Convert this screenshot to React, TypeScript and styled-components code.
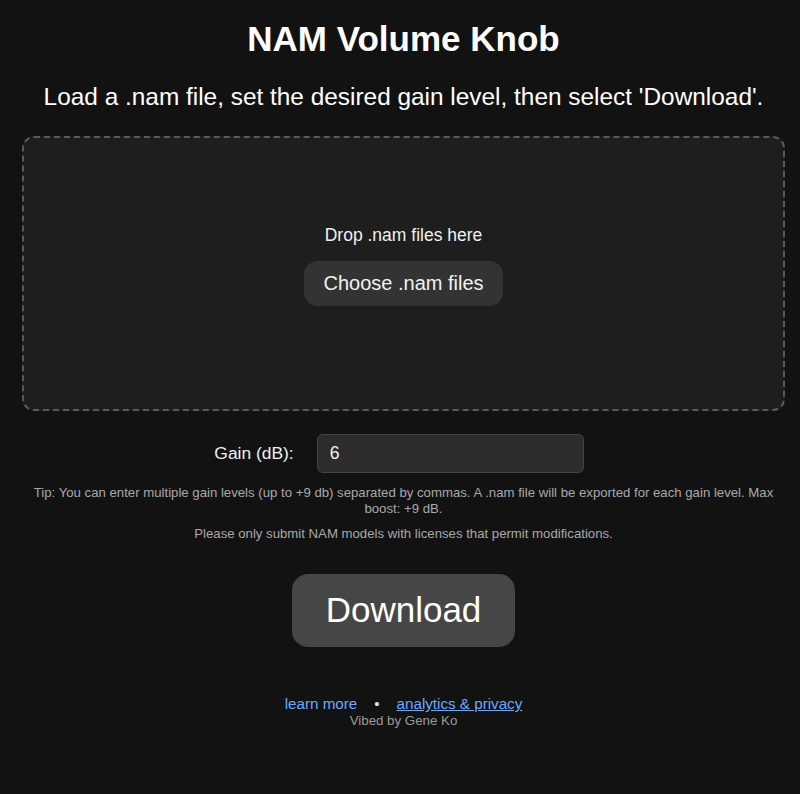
import React, { useState } from "react";
import styled, { createGlobalStyle } from "styled-components";

const GlobalStyle = createGlobalStyle`
  html, body {
    margin: 0;
    padding: 0;
    background: #121212;
  }
  body {
    font-family: "Liberation Sans", Arial, sans-serif;
    color: #ffffff;
  }
  * { box-sizing: border-box; }
`;

const Page = styled.main`
  padding: 19px 15px 40px 22px;
  display: flex;
  flex-direction: column;
  align-items: stretch;
  text-align: center;
`;

const Title = styled.h1`
  margin: 0;
  font-size: 35px;
  font-weight: 700;
  line-height: 1.15;
  color: #ffffff;
`;

const Subtitle = styled.p`
  margin: 24px 0 0;
  font-size: 24.4px;
  line-height: 1.15;
  color: #ffffff;
`;

const DropZone = styled.div`
  margin-top: 25px;
  height: 275px;
  border: 2px dashed #5a5a5a;
  border-radius: 12px;
  background: #1e1e1e;
  display: flex;
  flex-direction: column;
  align-items: center;
  padding-top: 87px;
  gap: 16px;
`;

const DropText = styled.div`
  font-size: 17.5px;
  line-height: 1.15;
  color: #f0f0f0;
`;

const ChooseButton = styled.button`
  font-family: inherit;
  font-size: 20px;
  line-height: 23px;
  color: #f2f2f2;
  background: #333333;
  border: none;
  border-radius: 14px;
  padding: 11px 19px;
  cursor: pointer;
`;

const GainRow = styled.div`
  margin-top: 23px;
  display: flex;
  justify-content: center;
  align-items: center;
  gap: 23px;
  padding-right: 9px;
`;

const GainLabel = styled.label`
  font-size: 17.4px;
  color: #f0f0f0;
`;

const GainInput = styled.input`
  width: 267px;
  height: 39px;
  font-family: inherit;
  font-size: 17.6px;
  color: #f2f2f2;
  background: #2c2c2c;
  border: 1px solid #454545;
  border-radius: 6px;
  padding: 0 12px;
  outline: none;
`;

const Note = styled.p<{ $gap: number }>`
  margin: ${(p) => p.$gap}px 0 0;
  font-size: 13.2px;
  line-height: 15.6px;
  color: #a9a9a9;
`;

const DownloadButton = styled.button`
  align-self: center;
  margin-top: 33px;
  font-family: inherit;
  font-size: 35px;
  line-height: 40px;
  color: #ffffff;
  background: #464646;
  border: none;
  border-radius: 16px;
  padding: 16px 34px 17px;
  cursor: pointer;
`;

const Footer = styled.footer`
  margin-top: 48px;
  display: flex;
  flex-direction: column;
  align-items: center;
`;

const LinkRow = styled.div`
  display: flex;
  align-items: center;
  gap: 17px;
  font-size: 15.2px;
  line-height: 1.15;
`;

const FooterLink = styled.a<{ $underline?: boolean }>`
  color: #6ea8fe;
  text-decoration: ${(p) => (p.$underline ? "underline" : "none")};
`;

const Bullet = styled.span`
  color: #e0e0e0;
  font-size: 15px;
`;

const Credit = styled.div`
  font-size: 13.3px;
  line-height: 1.2;
  color: #9a9a9a;
`;

export default function App() {
  const [gain, setGain] = useState("6");
  return (
    <>
      <GlobalStyle />
      <Page>
        <Title>NAM Volume Knob</Title>
        <Subtitle>
          Load a .nam file, set the desired gain level, then select 'Download'.
        </Subtitle>
        <DropZone>
          <DropText>Drop .nam files here</DropText>
          <ChooseButton type="button">Choose .nam files</ChooseButton>
        </DropZone>
        <GainRow>
          <GainLabel htmlFor="gain">Gain (dB):</GainLabel>
          <GainInput
            id="gain"
            value={gain}
            onChange={(e) => setGain(e.target.value)}
          />
        </GainRow>
        <Note $gap={12}>
          Tip: You can enter multiple gain levels (up to +9 db) separated by
          commas. A .nam file will be exported for each gain level. Max boost:
          +9 dB.
        </Note>
        <Note $gap={9}>
          Please only submit NAM models with licenses that permit modifications.
        </Note>
        <DownloadButton type="button">Download</DownloadButton>
        <Footer>
          <LinkRow>
            <FooterLink href="#">learn more</FooterLink>
            <Bullet>•</Bullet>
            <FooterLink href="#" $underline>
              analytics &amp; privacy
            </FooterLink>
          </LinkRow>
          <Credit>Vibed by Gene Ko</Credit>
        </Footer>
      </Page>
    </>
  );
}
